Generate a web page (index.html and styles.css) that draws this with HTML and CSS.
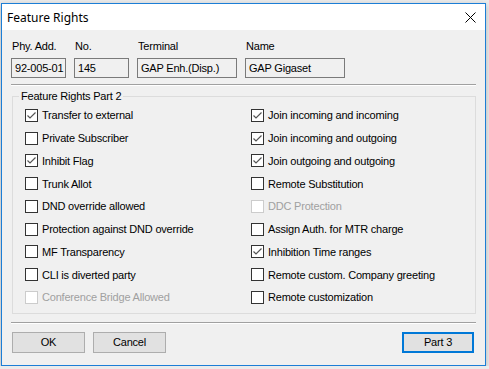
FILE: index.html
```html
<!DOCTYPE html>
<html lang="en">

<head>
    <meta charset="UTF-8">
    <meta name="viewport" content="width=device-width, initial-scale=1.0">
    <title>Feature Rights</title>
    <link rel="stylesheet" href="styles.css">
</head>

<body>
    <div class="window">
        <div class="titlebar">
            <span class="title">Feature Rights</span>
            <svg class="close" width="11" height="11" viewBox="0 0 11 11">
                <path d="M0.5 0.5 L10.5 10.5 M10.5 0.5 L0.5 10.5" stroke="#000" stroke-width="1" fill="none" />
            </svg>
        </div>

        <div class="content">
            <div class="info">
                <span class="lbl">Phy. Add.</span>
                <span class="lbl">No.</span>
                <span class="lbl">Terminal</span>
                <span class="lbl">Name</span>
                <div class="field">92-005-01</div>
                <div class="field">145</div>
                <div class="field">GAP Enh.(Disp.)</div>
                <div class="field">GAP Gigaset</div>
            </div>

            <div class="sep"></div>

            <fieldset class="group">
                <legend>Feature Rights Part 2</legend>
                <div class="checks">
                    <div class="check checked"><span class="box"></span>Transfer to external</div>
                    <div class="check"><span class="box"></span>Private Subscriber</div>
                    <div class="check checked"><span class="box"></span>Inhibit Flag</div>
                    <div class="check"><span class="box"></span>Trunk Allot</div>
                    <div class="check"><span class="box"></span>DND override allowed</div>
                    <div class="check"><span class="box"></span>Protection against DND override</div>
                    <div class="check"><span class="box"></span>MF Transparency</div>
                    <div class="check"><span class="box"></span>CLI is diverted party</div>
                    <div class="check disabled"><span class="box"></span>Conference Bridge Allowed</div>

                    <div class="check checked"><span class="box"></span>Join incoming and incoming</div>
                    <div class="check checked"><span class="box"></span>Join incoming and outgoing</div>
                    <div class="check checked"><span class="box"></span>Join outgoing and outgoing</div>
                    <div class="check"><span class="box"></span>Remote Substitution</div>
                    <div class="check disabled"><span class="box"></span>DDC Protection</div>
                    <div class="check"><span class="box"></span>Assign Auth. for MTR charge</div>
                    <div class="check checked"><span class="box"></span>Inhibition Time ranges</div>
                    <div class="check"><span class="box"></span>Remote custom. Company greeting</div>
                    <div class="check"><span class="box"></span>Remote customization</div>
                </div>
            </fieldset>

            <div class="sep"></div>

            <div class="buttons">
                <button>OK</button>
                <button>Cancel</button>
                <button class="default">Part 3</button>
            </div>
        </div>
    </div>
</body>

</html>
```

FILE: styles.css
```css
* {
    margin: 0;
    padding: 0;
    box-sizing: border-box;
}

body {
    background-color: #ebebeb;
    font-family: "Liberation Sans", Arial, sans-serif;
    font-size: 11px;
    letter-spacing: -0.2px;
    color: #000;
    padding: 3px 0 0 1px;
}

.window {
    width: 485px;
    height: 363px;
    border: 1px solid #1c7ed6;
    background-color: #f0f0f0;
    box-shadow: 0 2px 6px rgba(0, 0, 0, 0.25);
}

.titlebar {
    height: 26px;
    background-color: #fff;
    display: flex;
    align-items: center;
    justify-content: space-between;
    padding: 0 9px 0 5px;
}

.title {
    font-family: "Noto Sans", sans-serif;
    font-size: 12px;
    letter-spacing: 0;
}

.content {
    padding: 10px 9px 0 9px;
}

.info {
    display: grid;
    grid-template-columns: 55px 55px 100px 100px;
    grid-template-rows: 13px 20px;
    column-gap: 8px;
    row-gap: 5px;
}

.lbl {
    line-height: 13px;
    padding-left: 1px;
}

.field {
    border: 1px solid #7a7a7a;
    line-height: 18px;
    padding-left: 3px;
    white-space: nowrap;
    overflow: hidden;
}

.sep {
    height: 2px;
    border-top: 1px solid #a0a0a0;
    border-bottom: 1px solid #fff;
    margin-top: 6px;
}

.group {
    margin: 4px 0 0 1px;
    border: 1px solid #dcdcdc;
    padding: 1px 0 4px 12px;
}

.group legend {
    line-height: 13px;
    padding: 0 2px;
    margin-left: -6px;
}

.group + .sep {
    margin-top: 8px;
}

.checks {
    display: grid;
    grid-template-columns: 226px 1fr;
    grid-template-rows: repeat(9, 22.75px);
    grid-auto-flow: column;
}

.check {
    display: flex;
    align-items: center;
    white-space: nowrap;
}

.box {
    width: 13px;
    height: 13px;
    border: 1px solid #333;
    background-color: #fff;
    margin-right: 4px;
    flex-shrink: 0;
}

.check.checked .box {
    background: #fff url("data:image/svg+xml,%3Csvg xmlns='http://www.w3.org/2000/svg' width='11' height='11'%3E%3Cpath d='M1.5 5.5 L4 8 L9.5 2.5' stroke='%23555' stroke-width='1.2' fill='none'/%3E%3C/svg%3E") no-repeat center;
}

.check.disabled {
    color: #a0a0a0;
}

.check.disabled .box {
    border-color: #cccccc;
}

.buttons {
    display: flex;
    gap: 8px;
    margin: 8px 2px 0 1px;
}

.buttons button {
    width: 73px;
    height: 21px;
    background-color: #e1e1e1;
    border: 1px solid #adadad;
    font-family: inherit;
    font-size: 11px;
    letter-spacing: -0.2px;
    color: #000;
}

.buttons .default {
    margin-left: auto;
    width: 72px;
    border: 2px solid #0078d7;
}
```
